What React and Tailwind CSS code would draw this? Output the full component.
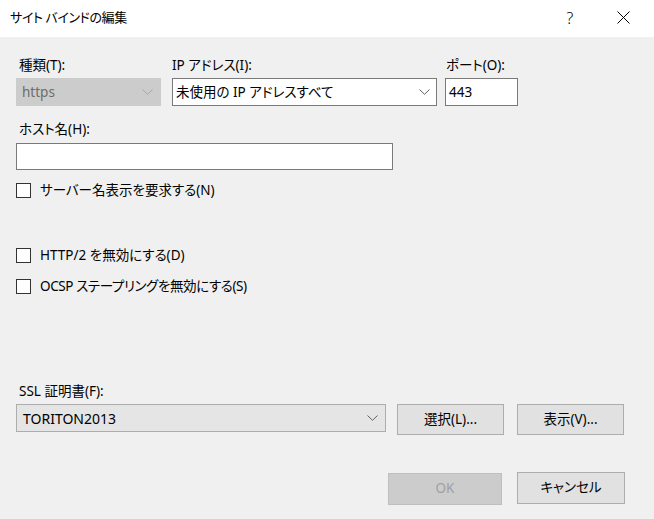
import React from "react";

const FONT = "font-['Noto_Sans','Noto_Sans_CJK_JP',sans-serif] [font-feature-settings:'palt']";

function Chevron({ color = "#606060" }) {
  return (
    <svg width="11" height="6" viewBox="0 0 11 6" className="shrink-0">
      <path d="M0.5 0.5 L5.5 5.3 L10.5 0.5" fill="none" stroke={color} strokeWidth="1" />
    </svg>
  );
}

function Checkbox({ label, className = "", tight = false }) {
  return (
    <div className={"flex items-center h-[18px] " + className}>
      <div className="w-[15px] h-[15px] border border-[#333333] bg-white shrink-0" />
      <span
        className={
          "ml-[9px] text-[13.5px] leading-[18px] text-black whitespace-nowrap " +
          (tight ? "tracking-[-0.4px]" : "")
        }
      >
        {label}
      </span>
    </div>
  );
}

function Button({ children, className = "", disabled = false }) {
  return (
    <div
      className={
        "flex items-center justify-center text-[13.5px] leading-none border " +
        (disabled
          ? "bg-[#cccccc] border-[#bfbfbf] text-[#a0a0a0] "
          : "bg-[#e1e1e1] border-[#adadad] text-black ") +
        className
      }
    >
      {children}
    </div>
  );
}

export default function App() {
  return (
    <div className={"w-[654px] h-[519px] bg-[#f0f0f0] flex flex-col overflow-hidden text-black " + FONT}>
      {/* Title bar */}
      <div className="h-[37px] bg-white flex items-center shrink-0">
        <div className="pl-[10px] text-[13px] tracking-[-0.4px] leading-none mt-[-2px]">サイト バインドの編集</div>
        <div className="ml-auto flex items-center mt-[-2px]">
          <span className="text-[16px] font-light leading-none w-[20px] text-center mr-[37px]">?</span>
          <svg width="13" height="13" viewBox="0 0 13 13" className="mr-[24px]">
            <path d="M0.5 0.5 L12.5 12.5 M12.5 0.5 L0.5 12.5" stroke="#000" strokeWidth="1" />
          </svg>
        </div>
      </div>

      {/* Body */}
      <div className="flex flex-col pl-[16px]">
        {/* Row 1 */}
        <div className="flex mt-[18px]">
          <div className="flex flex-col w-[145px]">
            <div className="h-[20px] pl-[3px] text-[13.5px] leading-[20px]">種類(T):</div>
            <div className="mt-[3px] h-[28px] bg-[#cccccc] border border-[#cccccc] flex items-center pl-[5px] pr-[7px]">
              <span className="text-[13.5px] text-[#6d6d6d] flex-1">https</span>
              <Chevron color="#a6a6a6" />
            </div>
          </div>
          <div className="flex flex-col w-[265px] ml-[11px]">
            <div className="h-[20px] text-[13.5px] leading-[20px]">IP アドレス(I):</div>
            <div className="mt-[3px] h-[28px] bg-white border border-[#7a7a7a] flex items-center pl-[3px] pr-[6px]">
              <span className="text-[13.5px] flex-1">未使用の IP アドレスすべて</span>
              <Chevron />
            </div>
          </div>
          <div className="flex flex-col w-[73px] ml-[8px]">
            <div className="h-[20px] pl-[1px] text-[13.5px] leading-[20px]">ポート(O):</div>
            <div className="mt-[3px] h-[28px] bg-white border border-[#7a7a7a] flex items-center pl-[3px]">
              <span className="text-[13.5px]">443</span>
            </div>
          </div>
        </div>

        {/* Host */}
        <div className="mt-[13px] h-[20px] pl-[3px] text-[13.5px] leading-[20px]">ホスト名(H):</div>
        <div className="mt-[4px] w-[377px] h-[27px] bg-white border border-[#7a7a7a]" />

        <Checkbox className="mt-[11px]" label="サーバー名表示を要求する(N)" />
        <Checkbox className="mt-[47px]" label="HTTP/2 を無効にする(D)" />
        <Checkbox className="mt-[13px]" tight label="OCSP ステープリングを無効にする(S)" />

        {/* SSL */}
        <div className="mt-[86px] h-[20px] pl-[3px] text-[13.5px] leading-[20px]">SSL 証明書(F):</div>
        <div className="flex mt-[3px] items-start">
          <div className="w-[370px] h-[28px] bg-[#e5e5e5] border border-[#adadad] flex items-center pl-[6px] pr-[7px]">
            <span className="text-[14px] flex-1">TORITON2013</span>
            <Chevron />
          </div>
          <Button className="ml-[11px] w-[107px] h-[31px]">選択(L)...</Button>
          <Button className="ml-[13px] w-[107px] h-[31px]">表示(V)...</Button>
        </div>

        {/* Bottom buttons */}
        <div className="flex mt-[37px] items-start">
          <Button disabled className="ml-[372px] w-[114px] h-[32px] mt-[1px]">OK</Button>
          <Button className="ml-[15px] w-[108px] h-[32px]">キャンセル</Button>
        </div>
      </div>
    </div>
  );
}
